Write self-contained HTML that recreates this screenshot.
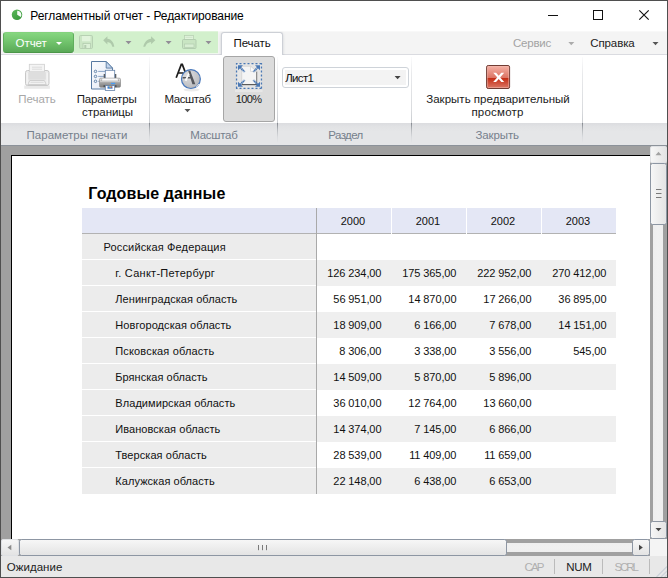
<!DOCTYPE html>
<html lang="ru">
<head>
<meta charset="utf-8">
<title>Регламентный отчет - Редактирование</title>
<style>
html,body{margin:0;padding:0;}
body{width:668px;height:578px;overflow:hidden;background:#fff;font-family:"Liberation Sans",sans-serif;font-size:12px;color:#1a1a1a;position:relative;}
div,span,svg{position:absolute;}
.abs{position:absolute;}
.t{white-space:pre;}
#border{left:0;top:0;width:666px;height:576px;border:1px solid #4f4f4f;}
#titlebar{left:0;top:0;width:668px;height:32px;background:#fff;}
#tabrow{left:0;top:31px;width:668px;height:23px;background:linear-gradient(#fafafa 0,#f4f4f4 1.500px,#f4f4f4);border-bottom:1px solid #dadbe0;}
#appbtn{left:3px;top:32px;width:69px;height:19px;border:1px solid;border-color:#84d27e #5fae5c #4b9649 #5fae5c;border-radius:3px;background:linear-gradient(#86d680,#72c46d 45%,#5aa957);}
#qat{left:74px;top:31px;width:144px;height:23px;background:linear-gradient(#e9f7e6 0,#d2f0cc 1.200px,#d2f0cc 22px,#eef8ec 22px);}
#tab{left:221px;top:32px;width:60px;height:23px;background:#fff;border:1px solid #cdd0d6;border-bottom:none;border-radius:3px 3px 0 0;box-shadow:0 1px 3px rgba(70,80,100,.2);clip-path:inset(-1px -4px 0 -4px);}
#ribbon{left:0;top:55px;width:668px;height:69px;background:#fff;}
#labels{left:0;top:123px;width:668px;height:22px;background:linear-gradient(#dbdcdf 0,#e2e3e5 4px,#e5e6e8 9px,#e5e6e8);}
.sep{top:57px;width:1px;height:66px;background:linear-gradient(#fbfbfc,#e9eaec 25%,#d9dbde 80%,#c9ccd0);}
.sep2{top:123px;width:1px;height:20px;background:linear-gradient(#858990,#b9bcc0 35%,#d9dbde 70%,#e5e6e8);}
#btn100{left:223px;top:56px;width:50px;height:64px;border:1px solid #a6a6a6;border-radius:3px;background:#dcdcdc;}
#combo{left:282px;top:67px;width:125px;height:19px;border:1px solid #ced3d9;border-radius:3px;background:#fff;}
#comboin{left:285px;top:70px;width:121px;height:15px;background:#f3f3f3;}
#preview{left:0;top:145px;width:668px;height:394px;background:#a0a0a0;border-top:1px solid #8c929a;}
#page{left:11px;top:155px;width:640px;height:384px;background:#fff;border-left:1px solid #000;border-top:1px solid #000;}
.hd{top:208px;height:25px;background:#e4e7f5;border-bottom:1px solid #b2b2b2;}
.vline{left:316px;top:208px;width:1px;height:286px;background:#a9a9a9;}
.rh{left:82px;width:234px;height:25px;background:#ececec;}
.rd{left:317px;width:299px;height:26px;background:#efefef;}
#vs{left:650px;top:146px;width:17px;height:393px;background:linear-gradient(90deg,#a0a0a0 0,#a0a0a0 3.200px,#eeeeee 3.200px,#f0f0f0 8px,#eeeeee 13.300px,#a0a0a0 13.300px);}
#hs{left:1px;top:539px;width:649px;height:17px;background:linear-gradient(#a0a0a0 0,#a0a0a0 3.700px,#eeeeee 3.700px,#f0f0f0 8px,#eeeeee 13.300px,#a0a0a0 13.300px);}
#corner{left:650px;top:539px;width:17px;height:17px;background:#f4f4f4;}
#status{left:0;top:556px;width:668px;height:22px;background:#e8e8e8;}
</style>
</head>
<body>
<div id="titlebar">
<svg style="left:10px;top:8px" width="14" height="14" viewBox="10 8 14 14"><defs><linearGradient id="gA" x1="0" y1="0" x2="0.600" y2="1"><stop offset="0" stop-color="#5cb85a"/><stop offset="1" stop-color="#3c9a3e"/></linearGradient></defs><circle cx="17" cy="14.800" r="5.250" fill="url(#gA)"/><path d="M17.200 14.700 L17.200 10.700 A4.100 4.100 0 0 1 20.800 16.900 Z" fill="#f6fbf6"/></svg>
<span class="t" id="ttl" style="left:30.30px;top:8.84px;font-size:12px;line-height:14px;height:14px;color:#000;letter-spacing:-0.082px;">Регламентный отчет - Редактирование</span>
<svg style="left:540px;top:0" width="128" height="32" viewBox="0 0 128 32"><path d="M8 15.500h10" stroke="#111" stroke-width="1" fill="none"/><rect x="53.500" y="10.500" width="9" height="9" stroke="#111" stroke-width="1" fill="none"/><path d="M99.300 10.300l9.400 9.400M108.700 10.300l-9.400 9.400" stroke="#111" stroke-width="1.150" fill="none"/></svg>
</div>
<div id="tabrow"></div><div id="qat"></div>
<div id="appbtn"></div>
<span class="t" id="otchet" style="left:15.60px;top:36.02px;font-size:11.5px;line-height:14px;height:14px;color:#fff;letter-spacing:-0.075px;">Отчет</span>
<svg class="abs" style="left:56px;top:42px" width="6" height="3"><path d="M0 0h6l-3 3z" fill="#fff"/></svg>
<svg style="left:74px;top:32px" width="146" height="21" viewBox="74 32 146 21">
<g><rect x="79.500" y="35.500" width="13" height="13" rx="1.200" fill="#cbe6c5" stroke="#b7d1b3"/><rect x="82" y="36" width="8.500" height="5.300" fill="#e1f4dc"/><rect x="83" y="43.500" width="7.500" height="5" fill="#dcf1d7" stroke="#b3cdb0" stroke-width="0.800"/><rect x="84.300" y="45" width="2" height="3" fill="#b3cdb0"/></g>
<path d="M103.200 40.300 L107.400 36.300 L107.400 38.700 C111.500 39.200 113.800 42.500 114.300 46.800 L112.300 46.800 C111.500 43.800 110 42.300 107.400 42.100 L107.400 44.400 Z" fill="#afcaab"/>
<path d="M125.500 41h6l-3 3.300z" fill="#928d97"/>
<path d="M155.300 40.200 L151.100 36.300 L151.100 38.700 C147 39.200 144.200 42.400 143.300 46.700 L145.200 46.700 C146.300 43.800 148.200 42.300 151.100 42.100 L151.100 44.300 Z" fill="#afcaab"/>
<path d="M165.600 41h6l-3 3.300z" fill="#928d97"/>
<g><rect x="184.500" y="35.500" width="9" height="5" fill="#e1f4dc" stroke="#b8d2b4" stroke-width="0.800"/><rect x="182.500" y="39.500" width="13.500" height="9" rx="1" fill="#c9e5c3" stroke="#b3cdb0"/><rect x="184.500" y="44" width="9.500" height="3.300" fill="#d9efd4" stroke="#b3cdb0" stroke-width="0.700"/><path d="M185.500 37.300h7" stroke="#c4dcc0" stroke-width="0.700"/></g>
<path d="M205.500 41h6l-3 3.300z" fill="#928d97"/>
</svg>
<div id="tab"></div>
<span class="t" id="tabtx" style="left:233.50px;top:36.02px;font-size:11.5px;line-height:14px;height:14px;color:#111;letter-spacing:-0.078px;">Печать</span>
<span class="t" id="servis" style="left:513.00px;top:36.02px;font-size:11.5px;line-height:14px;height:14px;color:#a3a3a3;letter-spacing:-0.218px;">Сервис</span>
<span class="t" id="spravka" style="left:590.30px;top:36.02px;font-size:11.5px;line-height:14px;height:14px;color:#222;letter-spacing:-0.121px;">Справка</span>
<svg class="abs" style="left:568px;top:42px" width="7" height="4"><path d="M0.300 0h6l-3 3.200z" fill="#ababab"/></svg>
<svg class="abs" style="left:652px;top:42px" width="7" height="4"><path d="M0.500 0h6l-3 3.200z" fill="#555"/></svg>
<div id="ribbon"></div><div id="labels"></div>
<div class="sep" style="left:149px"></div><div class="sep2" style="left:149px"></div>
<div class="sep" style="left:277px"></div><div class="sep2" style="left:277px"></div>
<div class="sep" style="left:411px"></div><div class="sep2" style="left:411px"></div>
<div class="sep" style="left:582px"></div><div class="sep2" style="left:582px"></div>
<div id="btn100"></div>
<div id="combo"></div><div id="comboin"></div>
<span class="t" id="list1" style="left:285.20px;top:71.02px;font-size:11.5px;line-height:14px;height:14px;color:#111;letter-spacing:-0.673px;">Лист1</span>
<svg class="abs" style="left:394px;top:76px" width="8" height="4"><path d="M0.600 0h6l-3 3.200z" fill="#444"/></svg>
<svg style="left:22px;top:62px" width="30" height="28" viewBox="22 62 30 28">
<rect x="24.200" y="85.500" width="25.700" height="3.300" fill="#e9e9e9"/>
<rect x="25.500" y="70.500" width="23.500" height="15" rx="2" fill="#ececec" stroke="#c8c8c8"/>
<rect x="29.300" y="64.300" width="15.200" height="7.500" fill="#f4f4f4" stroke="#cfcfcf" stroke-width="0.800"/>
<path d="M32 67.200h10M32 69.200h10" stroke="#d6d6d6" stroke-width="0.800"/>
<rect x="28.300" y="72" width="17.500" height="7.800" rx="0.800" fill="#dedede"/>
<path d="M29.800 80.500h14.500l2 4h-18.500z" fill="#f2f2f2" stroke="#c8c8c8" stroke-width="0.800"/>
<path d="M30.500 82.300h13.200" stroke="#d4d4d4" stroke-width="0.800"/>
<path d="M27.200 73v11" stroke="#f6f6f6" stroke-width="1"/><path d="M47.200 73v11" stroke="#f6f6f6" stroke-width="1"/>
</svg>
<svg style="left:88px;top:58px" width="36" height="36" viewBox="88 58 36 36">
<defs><linearGradient id="gP" x1="0" y1="0" x2="1" y2="1"><stop offset="0" stop-color="#fbfcfe"/><stop offset="1" stop-color="#e2e9f5"/></linearGradient>
<linearGradient id="gB" x1="0" y1="0" x2="0" y2="1"><stop offset="0" stop-color="#f0f0f0"/><stop offset="0.350" stop-color="#d0d0d0"/><stop offset="0.500" stop-color="#a4a4a4"/><stop offset="1" stop-color="#7c7c7c"/></linearGradient></defs>
<path d="M91.500 61.500h14.700l6.300 6.600v20.900h-21z" fill="url(#gP)" stroke="#587aa2"/>
<path d="M106.200 61.500v6.600h6.300z" fill="#c3d4ec" stroke="#587aa2" stroke-width="0.900"/>
<g fill="#e9eff8" stroke="#587aa2" stroke-width="0.900"><circle cx="95.500" cy="71.400" r="1.250"/><circle cx="95.500" cy="76.400" r="1.250"/><circle cx="95.500" cy="81.300" r="1.250"/></g>
<path d="M98.200 71.400h8M98.200 76.400h6M98.200 81.300h2" stroke="#7d9bc2" stroke-width="0.900"/>
<rect x="103.700" y="74" width="1.800" height="4.500" fill="#5a5a5a"/><rect x="114.500" y="74" width="1.800" height="4.500" fill="#5a5a5a"/>
<rect x="105.300" y="70.300" width="9.400" height="9" fill="#fdfdff" stroke="#6683a8" stroke-width="0.800"/>
<rect x="99.500" y="78.200" width="21" height="9" rx="1.300" fill="url(#gB)" stroke="#8a8a8a" stroke-width="0.700"/>
<rect x="102.500" y="78.600" width="15" height="1.600" fill="#fafafa"/>
<circle cx="101.200" cy="80" r="0.500" fill="#666"/><circle cx="118.700" cy="80" r="0.500" fill="#666"/>
<rect x="111" y="82.800" width="4.200" height="1.400" fill="#4b9cf2"/>
<rect x="103.500" y="85.200" width="13" height="2" fill="#4e4e4e"/>
<rect x="105.300" y="85.600" width="9.400" height="4.800" fill="#fdfdff" stroke="#6683a8" stroke-width="0.800"/>
<rect x="107.500" y="86.300" width="5" height="2.400" fill="#3f7fd0"/><rect x="109.500" y="86.300" width="1.500" height="1.200" fill="#f0d040"/><rect x="110.800" y="86.600" width="1.200" height="1.200" fill="#e05040"/>
</svg>
<svg style="left:170px;top:58px" width="36" height="36" viewBox="170 58 36 36">
<defs><radialGradient id="gZ" cx="0.350" cy="0.300" r="0.850"><stop offset="0" stop-color="#dedfe1"/><stop offset="0.600" stop-color="#c4c5c8"/><stop offset="1" stop-color="#afb0b4"/></radialGradient></defs>
<ellipse cx="191.500" cy="89.800" rx="8" ry="1.600" fill="#ebebeb"/>
<path d="M176.200 77.800 L181.300 64.400 L182.300 64.400 L187.300 77.600 M178 73 h7.600" fill="none" stroke="#1e1e1e" stroke-width="1.700"/>
<circle cx="190.900" cy="79.050" r="9.450" fill="url(#gZ)" stroke="#4878bc" stroke-width="1.200"/>
<path d="M188.200 70.800 L190.300 70.800 L195.300 84.300 L192.400 84.300 L190.600 78.600 L182.600 78.600 L182.600 76.900 L190 76.900 L189.100 73.600 Z" fill="#55575c"/>
<path d="M184.600 80.300 L188.700 72.600 L189.300 74.200 L186.500 81.200 Z" fill="#fbfbfb"/>
<path d="M196.300 87 L199 84" stroke="#f0f0f0" stroke-width="0.900"/>
</svg>
<svg style="left:231px;top:58px" width="36" height="36" viewBox="231 58 36 36">
<rect x="235" y="89.600" width="27.500" height="2.400" fill="#e7e7e7"/>
<rect x="236.500" y="63.500" width="25" height="25" fill="#e6e6e6"/>
<path d="M241.700 66.200h8.800l6.200 5.200v13.200h-15z" fill="#f5f5f5" stroke="#cdcdcd" stroke-width="0.700"/>
<path d="M256.700 71.400v13.200" fill="none" stroke="#7a7a7a" stroke-width="1"/><path d="M257.200 84.600h-15.500" fill="none" stroke="#555" stroke-width="1.100"/>
<path d="M250.500 66.200v5.200h6.200z" fill="#fcfcfc" stroke="#d2d2d2" stroke-width="0.700"/>
<g stroke="#4a78b4" stroke-width="1.300" stroke-dasharray="2 2" stroke-dashoffset="0.500" fill="none">
<path d="M236 63.550h25.500"/><path d="M236 88.450h25.500"/><path d="M236.550 63v25.500"/><path d="M261.450 63v25.500"/></g>
<g fill="#4a78b4">
<path d="M238 65.200h5l-5 5z"/><path d="M260 65.200h-5l5 5z"/><path d="M238 86.800h5l-5-5z"/><path d="M260 86.800h-5l5-5z"/>
</g>
<g stroke="#4a78b4" stroke-width="2" stroke-dasharray="1.500 0.500" fill="none">
<path d="M240 67.200l4.700 4.700"/><path d="M258 67.200l-4.700 4.700"/><path d="M240 84.800l4.700-4.700"/><path d="M258 84.800l-4.700-4.700"/>
</g>
</svg>
<svg style="left:484px;top:63px" width="28" height="28" viewBox="484 63 28 28">
<defs><linearGradient id="gC" x1="0" y1="0" x2="0" y2="1"><stop offset="0" stop-color="#f6b4a8"/><stop offset="0.530" stop-color="#dc7464"/><stop offset="0.550" stop-color="#c42c14"/><stop offset="1" stop-color="#dc7a68"/></linearGradient></defs>
<rect x="486.600" y="65.500" width="23" height="23" rx="1.600" fill="url(#gC)" stroke="#703c34" stroke-width="1"/>
<rect x="487.600" y="66.500" width="21" height="21" rx="0.800" fill="none" stroke="#f3b9ae" stroke-opacity="0.550" stroke-width="1"/>
<path d="M493.200 72.700h2.900l8.100 9.300h-2.900z" fill="#fff"/><path d="M504.200 72.700h-2.900l-8.100 9.300h2.900z" fill="#fff"/>
</svg>
<span class="t" id="b1" style="left:18.30px;top:92.02px;font-size:11.5px;line-height:14px;height:14px;color:#a8a8a8;letter-spacing:-0.037px;">Печать</span>
<span class="t" id="b2a" style="left:76.70px;top:92.02px;font-size:11.5px;line-height:14px;height:14px;color:#1a1a1a;letter-spacing:-0.164px;">Параметры</span>
<span class="t" id="b2b" style="left:82.10px;top:105.02px;font-size:11.5px;line-height:14px;height:14px;color:#1a1a1a;letter-spacing:-0.062px;">страницы</span>
<span class="t" id="b3" style="left:164.50px;top:92.02px;font-size:11.5px;line-height:14px;height:14px;color:#1a1a1a;letter-spacing:-0.434px;">Масштаб</span>
<svg class="abs" style="left:184px;top:109px" width="8" height="4"><path d="M0.500 0.100h6l-3 3.100z" fill="#555"/></svg>
<span class="t" id="b4" style="left:235.80px;top:92.19px;font-size:11px;line-height:14px;height:14px;color:#1a1a1a;letter-spacing:-0.647px;">100%</span>
<span class="t" id="b5a" style="left:426.20px;top:92.02px;font-size:11.5px;line-height:14px;height:14px;color:#1a1a1a;letter-spacing:0.024px;">Закрыть предварительный</span>
<span class="t" id="b5b" style="left:471.40px;top:105.02px;font-size:11.5px;line-height:14px;height:14px;color:#1a1a1a;letter-spacing:0.217px;">просмотр</span>
<span class="t" id="l1" style="left:26.60px;top:128.02px;font-size:11.5px;line-height:14px;height:14px;color:#76808c;letter-spacing:0.015px;">Параметры печати</span>
<span class="t" id="l2" style="left:190.30px;top:128.02px;font-size:11.5px;line-height:14px;height:14px;color:#76808c;letter-spacing:-0.284px;">Масштаб</span>
<span class="t" id="l3" style="left:328.30px;top:128.02px;font-size:11.5px;line-height:14px;height:14px;color:#76808c;letter-spacing:-0.603px;">Раздел</span>
<span class="t" id="l4" style="left:475.50px;top:128.02px;font-size:11.5px;line-height:14px;height:14px;color:#76808c;letter-spacing:-0.116px;">Закрыть</span>
<div id="preview"></div><div id="page"></div>
<span class="t" id="h1" style="left:88.30px;top:185.46px;font-size:16px;line-height:18px;height:18px;color:#000;font-weight:bold;letter-spacing:0.111px;">Годовые данные</span>
<div class="hd" style="left:82px;width:234px"></div>
<div class="vline"></div>
<div class="hd" style="left:317px;width:74px"></div>
<span class="t" style="left:340.76px;top:214.69px;font-size:11px;line-height:13px;height:13px;color:#111;">2000</span>
<div class="hd" style="left:392px;width:74px"></div>
<span class="t" style="left:415.76px;top:214.69px;font-size:11px;line-height:13px;height:13px;color:#111;">2001</span>
<div class="hd" style="left:467px;width:74px"></div>
<span class="t" style="left:490.76px;top:214.69px;font-size:11px;line-height:13px;height:13px;color:#111;">2002</span>
<div class="hd" style="left:542px;width:74px"></div>
<span class="t" style="left:565.76px;top:214.69px;font-size:11px;line-height:13px;height:13px;color:#111;">2003</span>
<div class="rh" style="top:234px"></div>
<span class="t" style="left:103.60px;top:240.69px;font-size:11px;line-height:13px;height:13px;color:#111;letter-spacing:0.139px;">Российская Федерация</span>
<div class="rh" style="top:260px"></div>
<div class="rd" style="top:260px"></div>
<span class="t" style="left:115.30px;top:266.69px;font-size:11px;line-height:13px;height:13px;color:#111;letter-spacing:0.261px;">г. Санкт-Петербург</span>
<span class="t" style="left:327.34px;top:266.69px;font-size:11px;line-height:13px;height:13px;color:#111;letter-spacing:-0.1px;">126 234,00</span>
<span class="t" style="left:402.34px;top:266.69px;font-size:11px;line-height:13px;height:13px;color:#111;letter-spacing:-0.1px;">175 365,00</span>
<span class="t" style="left:477.34px;top:266.69px;font-size:11px;line-height:13px;height:13px;color:#111;letter-spacing:-0.1px;">222 952,00</span>
<span class="t" style="left:552.34px;top:266.69px;font-size:11px;line-height:13px;height:13px;color:#111;letter-spacing:-0.1px;">270 412,00</span>
<div class="rh" style="top:286px"></div>
<span class="t" style="left:115.30px;top:292.69px;font-size:11px;line-height:13px;height:13px;color:#111;letter-spacing:0.064px;">Ленинградская область</span>
<span class="t" style="left:333.36px;top:292.69px;font-size:11px;line-height:13px;height:13px;color:#111;letter-spacing:-0.1px;">56 951,00</span>
<span class="t" style="left:408.36px;top:292.69px;font-size:11px;line-height:13px;height:13px;color:#111;letter-spacing:-0.1px;">14 870,00</span>
<span class="t" style="left:483.36px;top:292.69px;font-size:11px;line-height:13px;height:13px;color:#111;letter-spacing:-0.1px;">17 266,00</span>
<span class="t" style="left:558.36px;top:292.69px;font-size:11px;line-height:13px;height:13px;color:#111;letter-spacing:-0.1px;">36 895,00</span>
<div class="rh" style="top:312px"></div>
<div class="rd" style="top:312px"></div>
<span class="t" style="left:115.30px;top:318.69px;font-size:11px;line-height:13px;height:13px;color:#111;letter-spacing:0.072px;">Новгородская область</span>
<span class="t" style="left:333.36px;top:318.69px;font-size:11px;line-height:13px;height:13px;color:#111;letter-spacing:-0.1px;">18 909,00</span>
<span class="t" style="left:414.37px;top:318.69px;font-size:11px;line-height:13px;height:13px;color:#111;letter-spacing:-0.1px;">6 166,00</span>
<span class="t" style="left:489.37px;top:318.69px;font-size:11px;line-height:13px;height:13px;color:#111;letter-spacing:-0.1px;">7 678,00</span>
<span class="t" style="left:558.36px;top:318.69px;font-size:11px;line-height:13px;height:13px;color:#111;letter-spacing:-0.1px;">14 151,00</span>
<div class="rh" style="top:338px"></div>
<span class="t" style="left:115.30px;top:344.69px;font-size:11px;line-height:13px;height:13px;color:#111;letter-spacing:0.150px;">Псковская область</span>
<span class="t" style="left:339.37px;top:344.69px;font-size:11px;line-height:13px;height:13px;color:#111;letter-spacing:-0.1px;">8 306,00</span>
<span class="t" style="left:414.37px;top:344.69px;font-size:11px;line-height:13px;height:13px;color:#111;letter-spacing:-0.1px;">3 338,00</span>
<span class="t" style="left:489.37px;top:344.69px;font-size:11px;line-height:13px;height:13px;color:#111;letter-spacing:-0.1px;">3 556,00</span>
<span class="t" style="left:573.34px;top:344.69px;font-size:11px;line-height:13px;height:13px;color:#111;letter-spacing:-0.1px;">545,00</span>
<div class="rh" style="top:364px"></div>
<div class="rd" style="top:364px"></div>
<span class="t" style="left:115.30px;top:370.69px;font-size:11px;line-height:13px;height:13px;color:#111;letter-spacing:0.042px;">Брянская область</span>
<span class="t" style="left:333.36px;top:370.69px;font-size:11px;line-height:13px;height:13px;color:#111;letter-spacing:-0.1px;">14 509,00</span>
<span class="t" style="left:414.37px;top:370.69px;font-size:11px;line-height:13px;height:13px;color:#111;letter-spacing:-0.1px;">5 870,00</span>
<span class="t" style="left:489.37px;top:370.69px;font-size:11px;line-height:13px;height:13px;color:#111;letter-spacing:-0.1px;">5 896,00</span>
<div class="rh" style="top:390px"></div>
<span class="t" style="left:115.30px;top:396.69px;font-size:11px;line-height:13px;height:13px;color:#111;letter-spacing:0.069px;">Владимирская область</span>
<span class="t" style="left:333.36px;top:396.69px;font-size:11px;line-height:13px;height:13px;color:#111;letter-spacing:-0.1px;">36 010,00</span>
<span class="t" style="left:408.36px;top:396.69px;font-size:11px;line-height:13px;height:13px;color:#111;letter-spacing:-0.1px;">12 764,00</span>
<span class="t" style="left:483.36px;top:396.69px;font-size:11px;line-height:13px;height:13px;color:#111;letter-spacing:-0.1px;">13 660,00</span>
<div class="rh" style="top:416px"></div>
<div class="rd" style="top:416px"></div>
<span class="t" style="left:115.30px;top:422.69px;font-size:11px;line-height:13px;height:13px;color:#111;letter-spacing:0.054px;">Ивановская область</span>
<span class="t" style="left:333.36px;top:422.69px;font-size:11px;line-height:13px;height:13px;color:#111;letter-spacing:-0.1px;">14 374,00</span>
<span class="t" style="left:414.37px;top:422.69px;font-size:11px;line-height:13px;height:13px;color:#111;letter-spacing:-0.1px;">7 145,00</span>
<span class="t" style="left:489.37px;top:422.69px;font-size:11px;line-height:13px;height:13px;color:#111;letter-spacing:-0.1px;">6 866,00</span>
<div class="rh" style="top:442px"></div>
<span class="t" style="left:115.30px;top:448.69px;font-size:11px;line-height:13px;height:13px;color:#111;letter-spacing:0.059px;">Тверская область</span>
<span class="t" style="left:333.36px;top:448.69px;font-size:11px;line-height:13px;height:13px;color:#111;letter-spacing:-0.1px;">28 539,00</span>
<span class="t" style="left:409.17px;top:448.69px;font-size:11px;line-height:13px;height:13px;color:#111;letter-spacing:-0.1px;">11 409,00</span>
<span class="t" style="left:484.17px;top:448.69px;font-size:11px;line-height:13px;height:13px;color:#111;letter-spacing:-0.1px;">11 659,00</span>
<div class="rh" style="top:468px;height:26px"></div>
<div class="rd" style="top:468px"></div>
<span class="t" style="left:115.30px;top:474.69px;font-size:11px;line-height:13px;height:13px;color:#111;letter-spacing:0.066px;">Калужская область</span>
<span class="t" style="left:333.36px;top:474.69px;font-size:11px;line-height:13px;height:13px;color:#111;letter-spacing:-0.1px;">22 148,00</span>
<span class="t" style="left:414.37px;top:474.69px;font-size:11px;line-height:13px;height:13px;color:#111;letter-spacing:-0.1px;">6 438,00</span>
<span class="t" style="left:489.37px;top:474.69px;font-size:11px;line-height:13px;height:13px;color:#111;letter-spacing:-0.1px;">6 653,00</span>
<div id="vs"></div><div id="hs"></div><div id="corner"></div>
<svg style="left:0;top:140px" width="668" height="420" viewBox="0 140 668 420">
<defs><linearGradient id="gH" x1="0" y1="0" x2="1" y2="0"><stop offset="0" stop-color="#f7f7f7"/><stop offset="1" stop-color="#e3e3e3"/></linearGradient>
<linearGradient id="gV" x1="0" y1="0" x2="0" y2="1"><stop offset="0" stop-color="#f7f7f7"/><stop offset="1" stop-color="#e3e3e3"/></linearGradient></defs>
<!-- vertical -->
<rect x="650.500" y="146.500" width="16" height="16.500" rx="1.500" fill="url(#gH)" stroke="#dfe1e4"/>
<path d="M655.500 155.300l3-3.500 3 3.500z" fill="#a2a2a2"/>
<rect x="650.500" y="163.500" width="16" height="61" rx="2" fill="url(#gH)" stroke="#8d96a3"/>
<path d="M656 189.500h5.500M656 193.500h5.500M656 197.500h5.500" stroke="#7a7a7a" stroke-width="1"/>
<rect x="650.500" y="521.500" width="16" height="17" rx="2" fill="url(#gH)" stroke="#8d96a3"/>
<path d="M655.500 528l3 3.300 3-3.300z" fill="#444"/>
<!-- horizontal -->
<rect x="1.500" y="539.500" width="17" height="16" rx="1.500" fill="url(#gV)" stroke="#dfe1e4"/>
<path d="M11.300 544.700l-3.800 2.800 3.800 2.800z" fill="#8a8a8a"/>
<rect x="19.500" y="539.500" width="487" height="16" rx="2" fill="url(#gV)" stroke="#8d96a3"/>
<path d="M258.500 545v5.200M262.500 545v5.200M266.500 545v5.200" stroke="#7a7a7a" stroke-width="1"/>
<rect x="632.500" y="539.500" width="17" height="16" rx="2" fill="url(#gV)" stroke="#8d96a3"/>
<path d="M639 544.700l3.800 2.800-3.800 2.800z" fill="#444"/>
</svg>
<div id="status"></div>
<span class="t" id="st" style="left:6.80px;top:560.02px;font-size:11.5px;line-height:14px;height:14px;color:#222;letter-spacing:0.022px;">Ожидание</span>
<span class="t" id="cap" style="left:524.60px;top:560.02px;font-size:11.5px;line-height:14px;height:14px;color:#b0b0b0;letter-spacing:-1.928px;">CAP</span>
<span class="t" id="num" style="left:566.30px;top:560.02px;font-size:11.5px;line-height:14px;height:14px;color:#222;letter-spacing:-0.352px;">NUM</span>
<span class="t" id="scrl" style="left:614.60px;top:560.02px;font-size:11.5px;line-height:14px;height:14px;color:#b0b0b0;letter-spacing:-2.163px;">SCRL</span>
<div class="abs" style="left:554px;top:559px;width:1px;height:15px;background:#bbbbbb"></div>
<div class="abs" style="left:602px;top:559px;width:1px;height:15px;background:#bbbbbb"></div>
<div class="abs" style="left:649px;top:559px;width:1px;height:15px;background:#bbbbbb"></div>
<svg style="left:650px;top:560px" width="17" height="17" viewBox="650 560 17 17"><path d="M656.500 577l10.500-10.500M661 577l6-6M664.700 577l2.300-2.300" stroke="#cdd3da" stroke-width="1.300" fill="none"/></svg>
<div id="border"></div>
</body>
</html>
